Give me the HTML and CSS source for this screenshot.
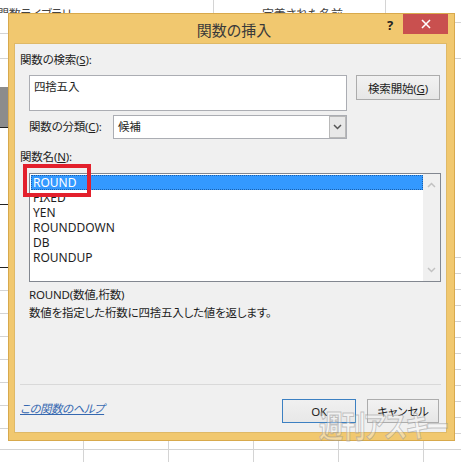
FILE: index.html
```html
<!DOCTYPE html>
<html lang="ja">
<head>
    <meta charset="UTF-8">
    <meta name="viewport" content="width=device-width, initial-scale=1.0">
    <title>関数の挿入</title>
    <link rel="stylesheet" href="styles.css">
</head>
<body>
    <div class="ribbon">
        <span class="group-label lib">関数ライブラリ</span>
        <span class="group-label names">定義された名前</span>
    </div>

    <div class="dialog">
        <div class="titlebar">
            <span></span>
            <span class="title">関数の挿入</span>
            <div class="controls">
                <span class="help">?</span>
                <span class="close">
                    <svg width="10" height="10" viewBox="0 0 10 10"><path d="M1 1L9 9M9 1L1 9" stroke="#fff" stroke-width="1.6"/></svg>
                </span>
            </div>
        </div>

        <div class="panel">
            <div class="label">関数の検索(<u>S</u>):</div>
            <div class="search-row">
                <div class="search-box">四捨五入</div>
                <button class="btn search-btn">検索開始(<u>G</u>)</button>
            </div>
            <div class="category-row">
                <span class="label cat-label">関数の分類(<u>C</u>):</span>
                <div class="select">
                    <span class="select-value">候補</span>
                    <span class="drop">
                        <svg width="9" height="6" viewBox="0 0 9 6"><path d="M1 1L4.5 4.5L8 1" fill="none" stroke="#555" stroke-width="1.5"/></svg>
                    </span>
                </div>
            </div>
            <div class="label names-label">関数名(<u>N</u>):</div>
            <div class="listbox">
                <ul class="items">
                    <li class="selected">ROUND</li>
                    <li>FIXED</li>
                    <li>YEN</li>
                    <li>ROUNDDOWN</li>
                    <li>DB</li>
                    <li>ROUNDUP</li>
                </ul>
                <div class="scrollbar">
                    <svg width="9" height="6" viewBox="0 0 9 6"><path d="M1 5L4.5 1.5L8 5" fill="none" stroke="#c2c2c2" stroke-width="1.5"/></svg>
                    <svg width="9" height="6" viewBox="0 0 9 6"><path d="M1 1L4.5 4.5L8 1" fill="none" stroke="#c2c2c2" stroke-width="1.5"/></svg>
                </div>
                <div class="highlight"></div>
            </div>
            <p class="syntax">ROUND(数値,桁数)</p>
            <p class="desc">数値を指定した桁数に四捨五入した値を返します。</p>
            <hr class="sep">
            <div class="footer">
                <a class="help-link">この関数のヘルプ</a>
                <button class="btn ok">OK</button>
                <button class="btn cancel">キャンセル</button>
            </div>
        </div>

        <div class="watermark">週刊アスキー</div>
    </div>
</body>
</html>
```

FILE: styles.css
```css
body {
    margin: 0;
    height: 462px;
    overflow: hidden;
    font-family: "Noto Sans", "Noto Sans CJK JP", sans-serif;
    font-size: 11.5px;
    letter-spacing: -0.2px;
    font-feature-settings: "palt";
    color: #1e1e1e;
    background-color: #fff;
    background-repeat: no-repeat;
    background-image:
        linear-gradient(#222, #222),
        linear-gradient(#222, #222),
        linear-gradient(#222, #222),
        linear-gradient(#8c8c8c, #8c8c8c),
        linear-gradient(#d4d4d4, #d4d4d4),
        linear-gradient(#d4d4d4, #d4d4d4),
        linear-gradient(#d4d4d4, #d4d4d4),
        repeating-linear-gradient(to right, transparent 0 83px, #d4d4d4 83px 84px, transparent 84px 85px),
        repeating-linear-gradient(to bottom, transparent 0 22px, #d4d4d4 22px 23px),
        repeating-linear-gradient(to bottom, transparent 0 15px, #d4d4d4 15px 16px),
        linear-gradient(#d4d4d4, #d4d4d4),
        linear-gradient(#d4d4d4, #d4d4d4),
        linear-gradient(#d4d4d4, #d4d4d4),
        linear-gradient(#d4d4d4, #d4d4d4);
    background-size:
        8px 1px, 8px 1px, 8px 1px,
        8px 40px,
        1px 13px, 1px 13px,
        100% 1px,
        100% 21px,
        8px 180px,
        6px 200px,
        8px 1px, 8px 1px,
        6px 1px, 6px 1px;
    background-position:
        0 127px, 0 204px, 0 267px,
        0 87px,
        213px 0, 385px 0,
        0 449px,
        0 441px,
        0 268px,
        455px 242px,
        0 33px, 0 58px,
        455px 22px, 455px 58px;
}

/* ribbon group captions, mostly hidden behind the dialog */
.ribbon {
    height: 13px;
    overflow: hidden;
    display: grid;
    grid-template-columns: 262px auto;
    color: #444;
    font-size: 12px;
    line-height: 16px;
}
.group-label {
    padding-top: 7px;
    white-space: nowrap;
}
.lib {
    margin-left: -3px;
}

.dialog {
    position: relative;
    margin-left: 8px;
    width: 447px;
    height: 428px;
    box-sizing: border-box;
    border: 1px solid #d8a94c;
    background-color: #f1c86f;
    padding: 0 7px 7px 5px;
}

.titlebar {
    height: 29px;
    display: grid;
    grid-template-columns: 1fr auto 1fr;
    margin-right: -7px;
}
.title {
    padding-top: 7px;
    line-height: 18px;
    font-size: 15px;
    letter-spacing: 0;
    color: #3a3a3a;
}
.controls {
    justify-self: end;
    display: flex;
    align-items: flex-start;
}
.help {
    margin-top: 3px;
    margin-right: 10px;
    font-weight: bold;
    font-size: 13px;
    line-height: 16px;
    color: #222;
}
.close {
    width: 45px;
    height: 20px;
    background-color: #c9504f;
    margin-right: 6px;
    display: flex;
    align-items: center;
    justify-content: center;
}

.panel {
    height: 390px;
    box-sizing: border-box;
    background-color: #f0f0f0;
    border: 1px solid #dfb967;
    padding: 8px 5px 0 5px;
    display: flex;
    flex-direction: column;
}

.label {
    line-height: 16px;
}
u {
    text-underline-offset: 1px;
}

.search-row {
    display: flex;
    gap: 9px;
    align-items: flex-start;
    margin: 7px 0 0 9px;
}
.search-box {
    width: 318px;
    height: 36px;
    box-sizing: border-box;
    border: 1px solid #abadb3;
    background-color: #fff;
    padding: 3px 4px;
    line-height: 16px;
}
.btn {
    height: 24px;
    padding: 0;
    border: 1px solid #acacac;
    border-radius: 0;
    background: linear-gradient(#f2f2f2, #e6e6e6);
    font-family: inherit;
    font-size: 11.5px;
    letter-spacing: -0.2px;
    font-feature-settings: "palt";
    color: #1e1e1e;
}
.search-btn {
    width: 84px;
    height: 25px;
}

.category-row {
    display: flex;
    align-items: center;
    margin: 4px 0 0 9px;
}
.cat-label {
    width: 84px;
}
.select {
    width: 234px;
    height: 24px;
    box-sizing: border-box;
    border: 1px solid #abadb3;
    background-color: #fff;
    display: flex;
}
.select-value {
    padding-left: 4px;
    line-height: 22px;
}
.drop {
    margin-left: auto;
    width: 17px;
    box-sizing: border-box;
    border: 1px solid #b9b9b9;
    background-color: #e8e8e8;
    display: flex;
    align-items: center;
    justify-content: center;
}

.names-label {
    margin-top: 10px;
}

.listbox {
    position: relative;
    margin: 8px 0 0 9px;
    width: 412px;
    height: 109px;
    box-sizing: border-box;
    border: 1px solid #828790;
    background-color: #fff;
    display: flex;
}
.items {
    flex: 1;
    list-style: none;
    margin: 0;
    padding: 1px 0 0 1px;
    font-size: 12px;
    letter-spacing: 0;
}
.items li {
    height: 15px;
    line-height: 15px;
    padding-left: 2px;
}
.items li.selected {
    background-color: #3399ff;
    color: #fff;
    outline: 1px dotted #1c5fa8;
    outline-offset: -1px;
}
.scrollbar {
    width: 17px;
    background-color: #f0f0f0;
    display: flex;
    flex-direction: column;
    align-items: center;
    justify-content: space-between;
    padding: 8px 0 8px;
}
.highlight {
    position: absolute;
    left: -7px;
    top: -10px;
    width: 68px;
    height: 33px;
    box-sizing: border-box;
    border: 4px solid #e3202c;
}

.syntax {
    margin: 4px 0 0 9px;
    line-height: 18px;
}
.desc {
    margin: 0 0 0 9px;
    line-height: 18px;
}
.sep {
    margin: 62px 0 0;
    border: 0;
    height: 1px;
    background-color: #d9d9d9;
}

.footer {
    display: flex;
    align-items: flex-start;
    margin-top: 14px;
    padding-right: 2px;
}
.help-link {
    margin-top: 1px;
    margin-right: auto;
    line-height: 18px;
    color: #3568b0;
    font-style: italic;
    letter-spacing: -0.5px;
    text-decoration: underline;
}
.ok {
    width: 74px;
    border-color: #3c80c2;
    background: linear-gradient(#f0f0f0, #e8e8e8);
}
.cancel {
    width: 72px;
    margin-left: 11px;
}

.watermark {
    position: absolute;
    left: 310px;
    top: 388px;
    font-size: 30px;
    font-weight: bold;
    letter-spacing: -2px;
    white-space: nowrap;
    color: rgba(255, 255, 255, 0.35);
    -webkit-text-stroke: 1px rgba(150, 150, 150, 0.55);
    transform: scaleX(0.8);
    transform-origin: left top;
}
```
